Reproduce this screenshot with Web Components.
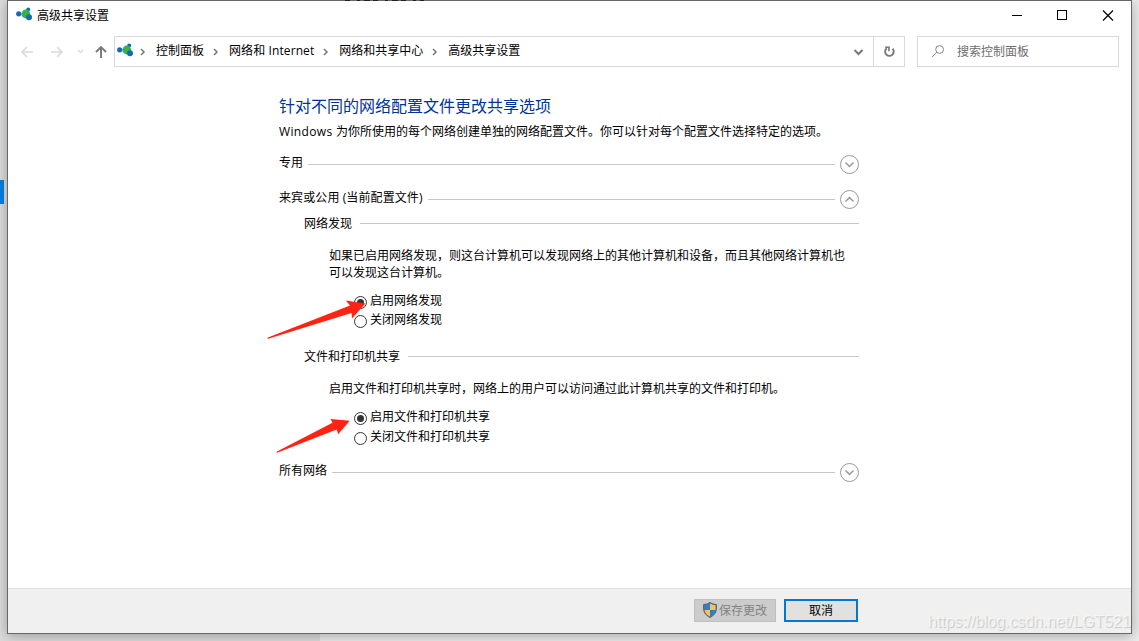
<!DOCTYPE html>
<html lang="zh-CN">
<head>
<meta charset="utf-8">
<title>高级共享设置</title>
<style>
html,body{margin:0;height:100%;overflow:hidden}
body{font:12px/16px "Open Sans","Noto Sans CJK SC",sans-serif;color:#000;background:#e6e6e6}
</style>
</head>
<body>
<settings-desktop></settings-desktop>
<script>
const define = (name, html) => customElements.define(name, class extends HTMLElement {
  constructor() {
    super();
    const t = document.createElement('template');
    t.innerHTML = typeof html === 'function' ? html(this) : html;
    this.attachShadow({mode: 'open'}).append(t.content.cloneNode(true));
  }
});

define('network-icon', `<style>:host{display:block;width:17px;height:15px}svg{display:block}</style>
<svg width="17" height="15" viewBox="0 0 17 15"><path d="M3 7H10L12.500 3M10 7L13 11" stroke="#9cc8e4" stroke-width="1" fill="none"/><circle cx="12.200" cy="2.400" r="2" fill="#1769b5"/><circle cx="2.700" cy="6.800" r="2.600" fill="#1769b5"/><circle cx="9.800" cy="7" r="4.400" fill="#35b44a"/><circle cx="13" cy="10.200" r="3" fill="#1769b5"/></svg>`);

define('title-bar', `<style>
:host{display:flex;height:30px;align-items:center;padding-left:8px}
network-icon{margin:-4px 4px 0 0}
span{flex:1;margin-top:-1px}
svg{display:block;margin-right:15px}
</style><network-icon></network-icon><span><slot></slot></span>
<svg width="106" height="14" viewBox="0 0 106 14" fill="none" stroke="#000" shape-rendering="crispEdges"><path d="M2 6.500H12"/><rect x="47.500" y="1.500" width="9" height="9"/><path d="M93 1.500L103 11.500M103 1.500L93 11.500" shape-rendering="auto" stroke-width="1.200"/></svg>`);

define('crumb-item', `<style>:host{display:flex;align-items:center}svg{margin:1px 10px 0 9px}</style>
<svg width="6" height="8" viewBox="0 0 6 8" fill="none" stroke="#777" stroke-width="1.500"><path d="M1 1L4 4L1 7"/></svg><span><slot></slot></span>`);

define('address-row', `<style>
:host{display:flex;height:31px;margin:5px 12px 0 0}
.nav{width:106px;display:flex}
.bar,.search{box-sizing:border-box;border:1px solid #d9d9d9;display:flex;align-items:center;background:#fff}
.bar{width:791px}
.bar network-icon{margin:-3px 0 0 2px}
.crumbs{display:flex;flex:1;margin-top:-1px;margin-left:-3px}
.en{letter-spacing:.1px}
.refresh{width:30px;height:29px;border-left:1px solid #d9d9d9}
.search{width:202px;margin-left:12px;color:#6d6d6d}
.search svg{margin:0 12px 0 13px}
svg{display:block}
</style>
<div class="nav"><svg width="106" height="31" viewBox="0 0 106 31" fill="none" stroke="#dadada" stroke-width="1.600"><path d="M25 16H14M19 11L14 16L19 21M43 16H54M49 11L54 16L49 21"/><path d="M70 14L72.500 16.500L75 14" stroke-width="1.400"/><path d="M93 22V11.500M88 16L93 11L98 16" stroke="#777" stroke-width="1.900"/></svg></div>
<div class="bar"><network-icon></network-icon><div class="crumbs"><crumb-item>控制面板</crumb-item><crumb-item class="en">网络和 Internet</crumb-item><crumb-item>网络和共享中心</crumb-item><crumb-item>高级共享设置</crumb-item></div>
<svg width="28" height="29" viewBox="0 0 28 29" fill="none" stroke="#777" stroke-width="2"><path d="M9.500 13L13.500 17L17.500 13"/></svg>
<div class="refresh"><svg width="30" height="29" viewBox="0 0 30 29" fill="none" stroke="#777" stroke-width="1.900"><path d="M18.600 11.700A4.300 4.300 0 1 1 12.800 11.200"/><path d="M11.200 10.300H15V14.300" stroke-width="1.600"/></svg></div></div>
<div class="search"><svg width="14" height="14" viewBox="0 0 14 14" fill="none" stroke="#858585"><circle cx="8.600" cy="4.500" r="3.900"/><path d="M5.800 7.300L1 12.100"/></svg><span>搜索控制面板</span></div>`);

define('profile-row', el => `<style>
:host{display:flex;height:19px;align-items:center}
span{margin:-4px 5px 0 0;white-space:nowrap}
i{flex:1;height:1px;background:#c8c8c8;margin-right:5px}
svg{display:block}
</style><span><slot></slot></span><i></i><svg width="19" height="19" viewBox="0 0 19 19" fill="none" stroke="#999"><circle cx="9.500" cy="9.500" r="9"/><path d="${el.hasAttribute('open') ? 'M5.500 11.500L9.500 7.500L13.500 11.500' : 'M5.500 7.500L9.500 11.500L13.500 7.500'}" stroke-width="1.500"/></svg>`);

define('group-row', `<style>:host{display:flex;height:17px;align-items:center;padding-left:25px}span{margin-right:8px}i{flex:1;height:1px;background:#c8c8c8}</style><span><slot></slot></span><i></i>`);

define('radio-option', el => `<style>:host{display:flex;height:14px;align-items:center;padding-left:75px}svg{display:block;margin-right:2px}span{margin-top:-3px}</style>
<svg width="14" height="14" viewBox="0 0 14 14"><circle cx="6.500" cy="7.500" r="6" fill="#fff" stroke="#333"/>${el.hasAttribute('checked') ? '<circle cx="6.500" cy="7.500" r="3.500" fill="#333"/>' : ''}</svg><span><slot></slot></span>`);

define('sharing-options', `<style>
:host{display:block;width:580px;margin:27px 0 0 271px;flex:1}
h1{font-size:16px;line-height:24px;font-weight:400;color:#003399;margin:0 0 6px}
p{margin:0}
.win{letter-spacing:.35px}
.note{margin-left:50px;line-height:17px}
</style>
<h1>针对不同的网络配置文件更改共享选项</h1>
<p><span class="win">Windows </span>为你所使用的每个网络创建单独的网络配置文件。你可以针对每个配置文件选择特定的选项。</p>
<profile-row style="margin-top:15px">专用</profile-row>
<profile-row open style="margin-top:16px;letter-spacing:.1px">来宾或公用 (当前配置文件)</profile-row>
<group-row style="margin-top:6px">网络发现</group-row>
<p class="note" style="margin-top:15px">如果已启用网络发现，则这台计算机可以发现网络上的其他计算机和设备，而且其他网络计算机也<br>可以发现这台计算机。</p>
<radio-option checked style="margin-top:14px">启用网络发现</radio-option>
<radio-option style="margin-top:5px">关闭网络发现</radio-option>
<group-row style="margin-top:20px">文件和打印机共享</group-row>
<p class="note" style="margin-top:15px">启用文件和打印机共享时，网络上的用户可以访问通过此计算机共享的文件和打印机。</p>
<radio-option checked style="margin-top:14px">启用文件和打印机共享</radio-option>
<radio-option style="margin-top:6px">关闭文件和打印机共享</radio-option>
<profile-row style="margin-top:18px">所有网络</profile-row>`);

define('push-button', `<style>
:host{box-sizing:border-box;display:flex;align-items:center;justify-content:center;height:23px;width:74px;border:2px solid #0078d7;background:#e1e1e1}
:host([disabled]){width:82px;border:1px solid #bfbfbf;background:#ccc;color:#838383}
</style><slot></slot>`);

define('action-footer', `<style>
:host{box-sizing:border-box;display:flex;height:45px;border-top:1px solid #dfdfdf;background:#f0f0f0;padding:10px 0 0 686px;gap:8px}
svg{display:block;margin:-2px 2px 0 0}
</style><push-button disabled><svg width="14" height="16" viewBox="0 0 14 16"><path d="M7 .500Q10 2.600 13.400 2.500V7Q13 12.500 7 15.500Q1 12.500 .600 7V2.500Q4 2.600 7 .500Z" fill="#2f7fc8"/><path d="M7 1.500Q9.500 3.200 12.600 3.300V8H7ZM7 8V14.700Q2 12 1.400 8Z" fill="#f6c451"/><path d="M7 .500Q10 2.600 13.400 2.500V7Q13 12.500 7 15.500Q1 12.500 .600 7V2.500Q4 2.600 7 .500Z" fill="none" stroke="#5c6268"/></svg>保存更改</push-button><push-button>取消</push-button>`);

define('settings-window', `<style>
:host{box-sizing:border-box;display:flex;flex-direction:column;width:1125px;height:634px;border:1px solid #686868;background:#fff;box-shadow:0 2px 12px rgba(0,0,0,.3)}
</style><title-bar>高级共享设置</title-bar><address-row></address-row><sharing-options></sharing-options><action-footer></action-footer>`);

define('settings-desktop', `<style>
:host{display:block;position:relative;width:1139px;height:641px;overflow:hidden;background:linear-gradient(#dcdcdc,#dcdcdc) 0 0/320px 100% no-repeat,#ececec}
settings-window{margin-left:7px;position:relative}
.accent{position:absolute;left:0;top:180px;width:4px;height:24px;background:#0078d7}
.over{position:absolute;left:0;top:0}
.mark{position:absolute;left:928px;top:613px;font:16px/18px "Liberation Sans",sans-serif;letter-spacing:-.1px;color:rgba(255,255,255,.6);text-shadow:1px 1px 1px rgba(0,0,0,.18);white-space:nowrap}
</style><settings-window></settings-window><div class="accent"></div>
<svg class="over" width="1139" height="641" viewBox="0 0 1139 641"><path d="M345 .500H424" stroke="#222" stroke-dasharray="5 7 3 4 6 3"/><g fill="#ff2314"><path d="M267.500 339L268 337.500L350 305.500L345.800 300.500L365.500 303.500L352 318.500L351.500 313Z"/><path d="M276.500 453L277 451.500L332.500 422.800L330.500 419L349.800 420.800L338.200 434.300L336.700 429.500Z"/></g></svg>
<div class="mark">https://blog.csdn.net/LGT521</div>`);
</script>
</body>
</html>
